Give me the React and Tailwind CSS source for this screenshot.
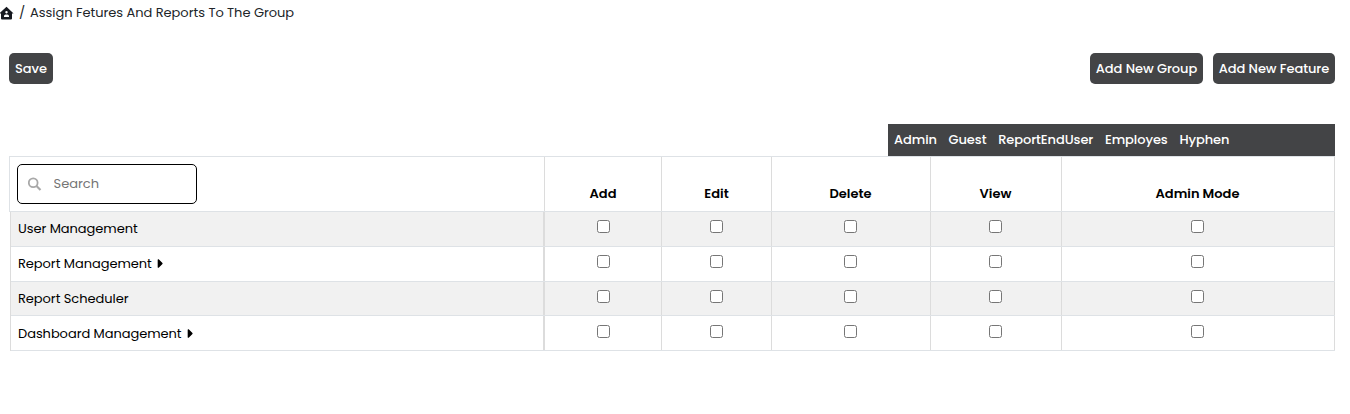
import { FaCaretRight } from "react-icons/fa";

const groups = ["Admin", "Guest", "ReportEndUser", "Employes", "Hyphen"];
const permissions = [
  { name: "Add", shift: "" },
  { name: "Edit", shift: "" },
  { name: "Delete", shift: "pr-px" },
  { name: "View", shift: "pr-px" },
  { name: "Admin Mode", shift: "pr-px" },
];
const features = [
  { name: "User Management", height: "h-[35px]", pad: "pt-2" },
  { name: "Report Management", height: "h-[35px]", pad: "pt-2", expandable: true },
  { name: "Report Scheduler", height: "h-[34px]", pad: "pt-2" },
  { name: "Dashboard Management", height: "h-[35px]", pad: "pt-[9px]", expandable: true },
];

function HomeIcon() {
  return (
    <svg width="14" height="14" viewBox="0 0 14 14" className="shrink-0">
      <path
        fill="#16191f"
        fillRule="evenodd"
        d="M6.5 .8 L13.6 7.4 H12 V12.4 Q12 13.4 11 13.4 H2 Q1 13.4 1 12.4 V7.4 H-.6 Z M6.5 5 a1.2 1.2 0 1 0 .01 0 Z M4 11 H9 V10.1 C8.8 8.9 7.6 8.5 6.5 8.5 S4.2 8.9 4 10.1 Z"
      />
    </svg>
  );
}

function SearchIcon() {
  return (
    <svg width="14" height="14" viewBox="0 0 14 14" className="shrink-0" fill="none" stroke="#a8a8a8">
      <circle cx="5.2" cy="5.7" r="4.4" strokeWidth="1.8" />
      <path d="M8.5 9 L12.5 13" strokeWidth="2.1" />
    </svg>
  );
}

function Button({ children, className }) {
  return (
    <button
      className={`h-[31px] rounded-[5px] bg-[#434446] text-center font-medium tracking-[-0.06px] whitespace-nowrap text-white ${className}`}
    >
      {children}
    </button>
  );
}

export default function App() {
  return (
    <div className="h-[414px] w-[1350px] overflow-hidden bg-white font-[Poppins,Inter,sans-serif] text-[13px] leading-5 text-black">
      <nav className="flex h-[26px] items-center text-[#212529]">
        <HomeIcon />
        <span className="ml-[5px] w-[5px] text-[13px]">/</span>
        <span className="ml-[6px] tracking-[-0.03px]">
          Assign Fetures And Reports To The Group
        </span>
      </nav>

      <div className="mt-[27px] mr-[15px] ml-[9px] flex">
        <Button className="w-11">Save</Button>
        <Button className="ml-auto w-[113px]">Add New Group</Button>
        <Button className="ml-2.5 w-[122px]">Add New Feature</Button>
      </div>

      <div className="mt-10 mr-[15px] ml-auto flex h-8 w-[447px] items-center gap-[11.7px] bg-[#434446] pl-1.5 font-medium tracking-[-0.08px] text-white">
        {groups.map((group) => (
          <span key={group}>{group}</span>
        ))}
      </div>

      <div className="ml-[9px] w-[1326px]">
        <div className="grid h-14 grid-cols-[535px_117px_110px_159px_131px_273px] border-y border-l border-[#dee2e6]">
          <div className="border-r border-[#dcdcdc] pt-[7px] pl-[7px]">
            <div className="flex h-10 w-[180px] items-center rounded-[5px] border border-black pl-[10px]">
              <SearchIcon />
              <input
                placeholder="Search"
                className="ml-[11.5px] w-28 text-[13px] outline-none placeholder:text-[#757575]"
              />
            </div>
          </div>
          {permissions.map(({ name, shift }) => (
            <div
              key={name}
              className={`border-r border-[#dcdcdc] pt-[27px] text-center font-semibold ${shift}`}
            >
              {name}
            </div>
          ))}
        </div>

        <div className="ml-px border-l border-[#dcdcdc]">
          {features.map(({ name, height, pad, expandable }) => (
            <div
              key={name}
              className={`grid grid-cols-[534px_117px_110px_159px_131px_273px] border-b border-[#dee2e6] odd:bg-[#f1f1f1] ${height}`}
            >
              <div className={`border-r-2 border-[#dcdcdc] pl-[7px] ${pad}`}>
                <div className="-mt-px flex items-center tracking-[-0.05px]">
                  {name}
                  {expandable && <FaCaretRight size={15} className="mb-0.5 ml-px" />}
                </div>
              </div>
              {permissions.map((permission) => (
                <div
                  key={permission.name}
                  className={`flex items-start justify-center border-r border-[#dcdcdc] ${pad} ${permission.shift}`}
                >
                  <input
                    type="checkbox"
                    aria-label={`${name}: ${permission.name}`}
                    className="h-[13px] w-[13px]"
                  />
                </div>
              ))}
            </div>
          ))}
        </div>
      </div>
    </div>
  );
}
